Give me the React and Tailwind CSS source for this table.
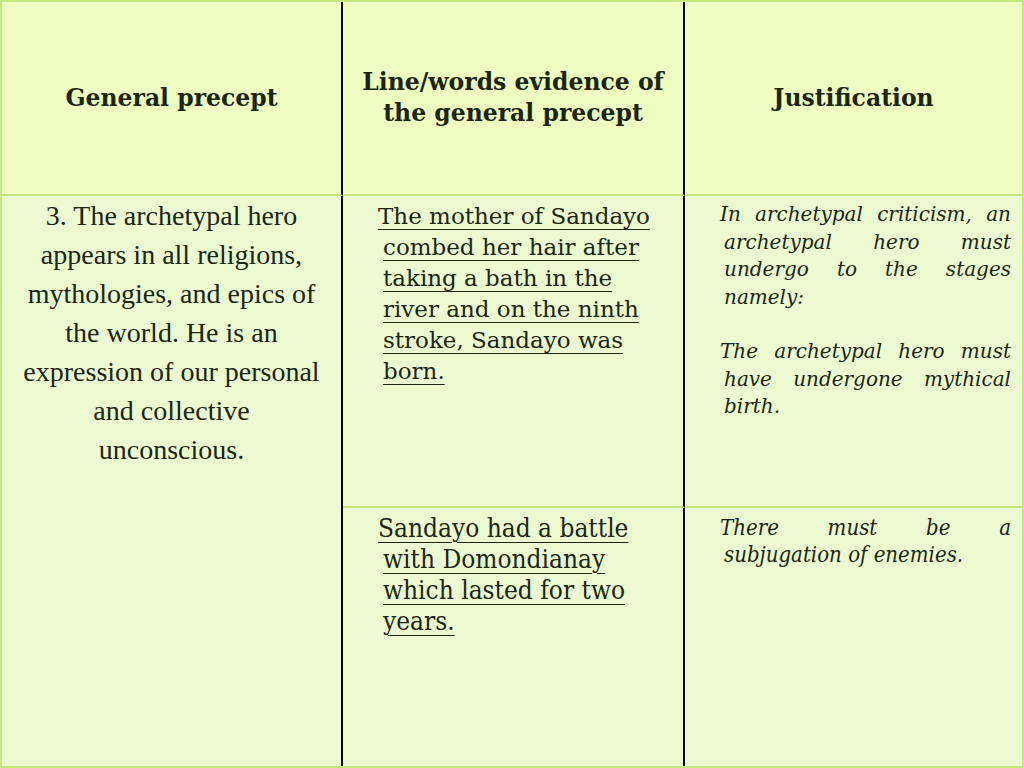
const Lines = ({ lines, className }) => (
  <div className={className}>
    {lines.map((l, i) => (
      <div key={i} className={i === 0 ? '' : 'pl-[5px]'}>
        <span className="underline underline-offset-[5px] decoration-1">{l}</span>
      </div>
    ))}
  </div>
);

const Justified = ({ lines, className }) => (
  <div className={className}>
    {lines.map((l, i) => (
      <div
        key={i}
        className={
          (i === 0 ? '' : 'pl-[4px] ') +
          (i === lines.length - 1 ? 'text-left' : 'text-justify [text-align-last:justify]')
        }
      >
        {l}
      </div>
    ))}
  </div>
);

const App = () => {
  return (
    <div className="w-[1024px] h-[768px] grid grid-cols-[341px_342px_1fr] grid-rows-[194px_312px_1fr] border-2 border-[#c6e77c] bg-[#ebfad0] text-[#1b2610] overflow-hidden">
      {/* header row */}
      <div className="flex items-center justify-center bg-[#eefdc0] border-r-2 border-r-black border-b-2 border-b-[#c6e77c]">
        <h2 className="font-['DejaVu_Serif',serif] font-bold text-[23.5px] leading-[31px] text-center">General precept</h2>
      </div>
      <div className="flex items-center justify-center bg-[#eefdc0] border-r-2 border-r-black border-b-2 border-b-[#c6e77c]">
        <h2 className="font-['DejaVu_Serif',serif] font-bold text-[23.5px] leading-[31px] text-center">
          Line/words evidence of
          <br />
          the general precept
        </h2>
      </div>
      <div className="flex items-center justify-center bg-[#eefdc0] border-b-2 border-b-[#c6e77c]">
        <h2 className="font-['DejaVu_Serif',serif] font-bold text-[23.5px] leading-[31px] text-center">Justification</h2>
      </div>

      {/* precept column spans both body rows */}
      <div className="row-span-2 border-r-2 border-r-black">
        <div className="font-['Liberation_Serif',serif] text-[28px] leading-[39px] text-center">
          <div>3. The archetypal hero</div>
          <div>appears in all religions,</div>
          <div>mythologies, and epics of</div>
          <div>the world. He is an</div>
          <div>expression of our personal</div>
          <div>and collective</div>
          <div>unconscious.</div>
        </div>
      </div>

      {/* row 1 */}
      <div className="border-r-2 border-r-black border-b-2 border-b-[#c6e77c] pl-[35px] pt-[5px]">
        <Lines
          className="font-['DejaVu_Serif',serif] text-[23px] leading-[31px] whitespace-nowrap"
          lines={[
            'The mother of Sandayo',
            'combed her hair after',
            'taking a bath in the',
            'river and on the ninth',
            'stroke, Sandayo was',
            'born.',
          ]}
        />
      </div>
      <div className="border-b-2 border-b-[#c6e77c] pl-[35px] pr-[11px] pt-[5px] font-['DejaVu_Serif',serif] italic text-[20px] leading-[27.5px]">
        <Justified
          lines={[
            'In archetypal criticism, an',
            'archetypal hero must',
            'undergo to the stages',
            'namely:',
          ]}
        />
        <Justified
          className="mt-[27px]"
          lines={['The archetypal hero must', 'have undergone mythical', 'birth.']}
        />
      </div>

      {/* row 2 */}
      <div className="border-r-2 border-r-black pl-[35px] pt-[5px]">
        <Lines
          className="font-['DejaVu_Serif',serif] [font-stretch:condensed] text-[26px] leading-[31px] whitespace-nowrap"
          lines={['Sandayo had a battle', 'with Domondianay', 'which lasted for two', 'years.']}
        />
      </div>
      <div className="pl-[35px] pr-[11px] pt-[6px] font-['DejaVu_Serif',serif] [font-stretch:condensed] italic text-[22px] leading-[27px]">
        <Justified lines={['There must be a', 'subjugation of enemies.']} />
      </div>
    </div>
  );
};

export default App;
